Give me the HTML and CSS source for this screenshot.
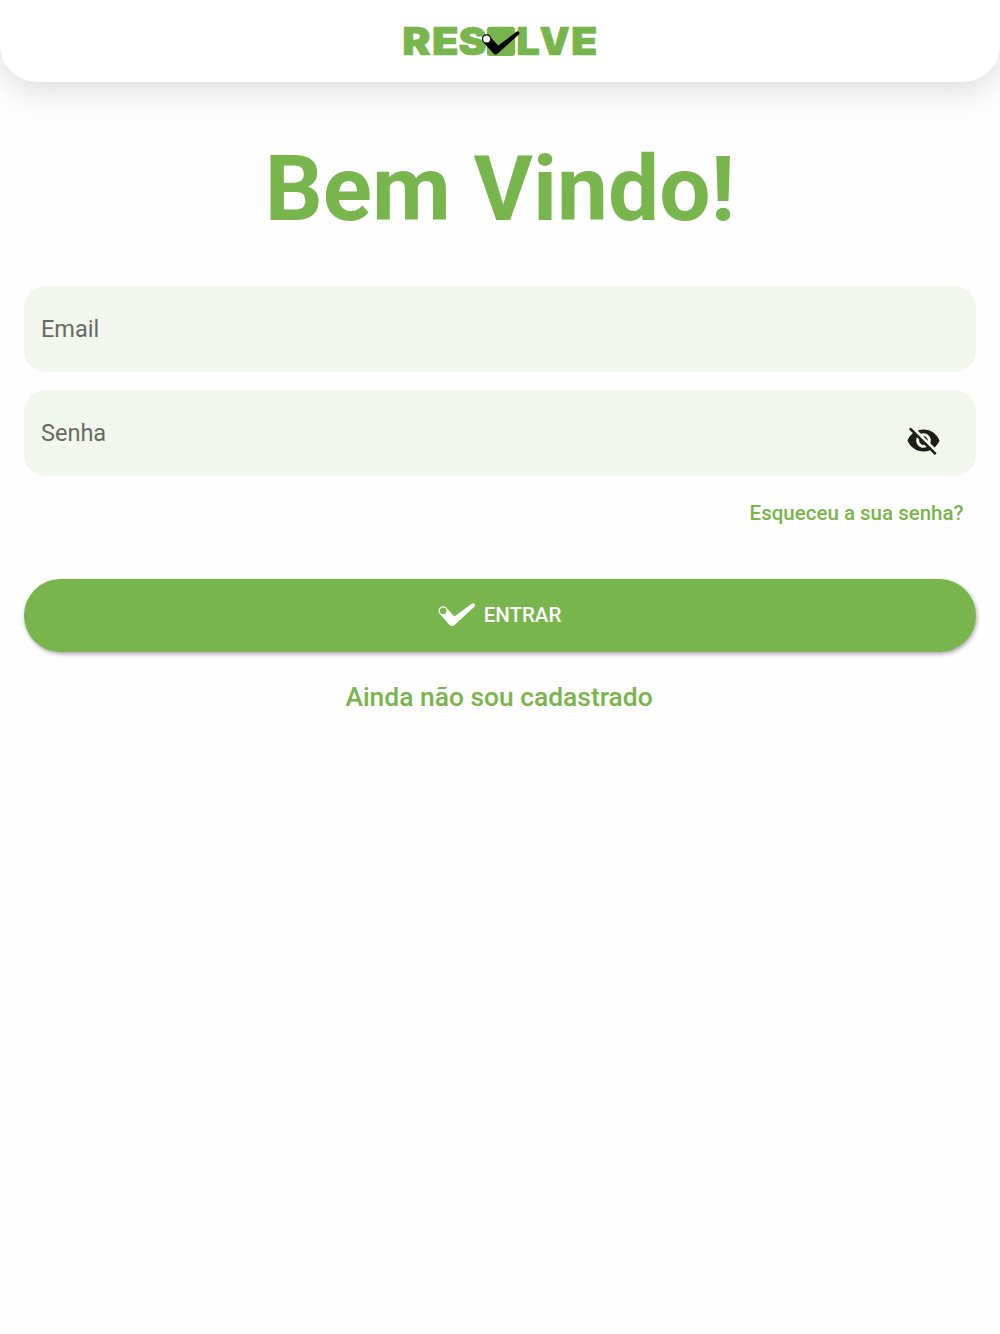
FILE: index.html
```html
<!DOCTYPE html>
<html lang="pt-BR">
<head>
    <meta charset="UTF-8">
    <meta name="viewport" content="width=device-width, initial-scale=1.0">
    <title>Resolve</title>
    <link rel="stylesheet" href="styles.css">
</head>
<body>
    <header class="header">
        <svg class="logo" width="200" height="60" viewBox="0 -10 200 60" role="img" aria-label="Resolve">
            <g class="logo-text">
                <text x="2.2" y="34.1" textLength="28.4" lengthAdjust="spacingAndGlyphs">R</text>
                <text x="32" y="34.1" textLength="26.6" lengthAdjust="spacingAndGlyphs">E</text>
                <text x="58.5" y="34.1" textLength="28" lengthAdjust="spacingAndGlyphs">S</text>
                <text x="116.2" y="34.1" textLength="23.6" lengthAdjust="spacingAndGlyphs">L</text>
                <text x="139.4" y="34.1" textLength="30.4" lengthAdjust="spacingAndGlyphs">V</text>
                <text x="171" y="34.1" textLength="26.4" lengthAdjust="spacingAndGlyphs">E</text>
            </g>
            <rect class="logo-box" x="86.8" y="5.8" width="28.4" height="29.2" rx="3.5"/>
            <path class="logo-check" d="M83.5 21.5 L89.8 15.5 L98.3 24.5 L116.8 10.5 Q118.6 9.8 119.3 11.2 Q119.8 12.6 118.8 13.5 L97.8 32.5 Q95.5 34.6 93.2 32.3 Z"/>
            <circle class="logo-dot" cx="86.6" cy="17.9" r="4.1"/>
        </svg>
    </header>

    <main class="login">
        <h1>Bem Vindo!</h1>

        <form class="form">
            <div class="field">
                <input type="email" placeholder="Email" aria-label="Email">
            </div>
            <div class="field">
                <input type="password" placeholder="Senha" aria-label="Senha">
                <svg class="eye" viewBox="0 0 24 24">
                    <path d="M12 7c2.76 0 5 2.24 5 5 0 .65-.13 1.26-.36 1.83l2.92 2.92c1.51-1.26 2.7-2.89 3.43-4.75-1.73-4.39-6-7.5-11-7.5-1.4 0-2.74.25-3.98.7l2.16 2.16C10.74 7.13 11.35 7 12 7zM2 4.27l2.28 2.28.46.46C3.08 8.3 1.78 10.02 1 12c1.73 4.39 6 7.5 11 7.5 1.55 0 3.03-.3 4.38-.84l.42.42L19.73 22 21 20.73 3.27 3 2 4.27zM7.53 9.8l1.55 1.55c-.05.21-.08.43-.08.65 0 1.66 1.34 3 3 3 .22 0 .44-.03.65-.08l1.55 1.55c-.67.33-1.41.53-2.2.53-2.76 0-5-2.24-5-5 0-.79.2-1.53.53-2.2zm4.31-.78l3.15 3.15.02-.16c0-1.66-1.34-3-3-3l-.17.01z"/>
                </svg>
            </div>
            <a class="forgot" href="#">Esqueceu a sua senha?</a>
            <button class="enter" type="button">
                <svg class="check" width="38" height="26" viewBox="0 0 38 26">
                    <path d="M1.8 11.8 L8.7 6.3 L16.3 14.5 L34 1.6 Q36 .7 37 2.2 Q37.6 3.7 36.4 4.8 L16.3 23.2 Q13.7 25.2 11.3 22.8 Z"/>
                    <circle cx="5.1" cy="8.8" r="4"/>
                </svg>
                <span>ENTRAR</span>
            </button>
            <a class="register" href="#">Ainda não sou cadastrado</a>
        </form>
    </main>
</body>
</html>
```
FILE: styles.css
```css
body {
    margin: 0;
    min-height: 100vh;
    background: #fefefe;
    font-family: Roboto, sans-serif;
    overflow-x: hidden;
}

.header {
    height: 82px;
    display: flex;
    justify-content: center;
    align-items: flex-start;
    padding-top: 11px;
    box-sizing: border-box;
    background: white;
    border-radius: 0 0 37px 37px;
    box-shadow: 0 8px 34px rgba(0, 0, 0, 0.14);
}

.logo-text {
    font-family: Inter, sans-serif;
    font-size: 38.5px;
    font-weight: 900;
    fill: #78b54c;
    stroke: #78b54c;
    stroke-width: 0.7;
}

.logo-box {
    fill: #78b54c;
}

.logo-dot {
    fill: white;
    stroke: black;
    stroke-width: 1.2;
}

.login {
    padding: 0 24px;
}

h1 {
    margin: 53px 0 0;
    color: #78b54c;
    font-size: 91px;
    line-height: 108px;
    font-weight: 700;
    text-align: center;
}

.form {
    display: flex;
    flex-direction: column;
    margin-top: 43px;
}

.field {
    display: flex;
    align-items: center;
    height: 86px;
    margin-bottom: 18px;
    padding: 0 35px 0 17px;
    box-sizing: border-box;
    background: #f2f7ed;
    border-radius: 22px;
}

.field input {
    flex: 1;
    padding: 0;
    border: none;
    outline: none;
    background: none;
    font-family: inherit;
    font-size: 23.5px;
}

.field input::placeholder {
    color: #666a64;
}

.eye {
    width: 35px;
    height: 35px;
    margin-top: 15px;
    fill: #1c1e1b;
}

.forgot {
    align-self: flex-end;
    margin: 7px 12.5px 0 0;
    color: #78b54c;
    font-size: 20.5px;
    line-height: 24px;
    font-weight: 500;
    text-decoration: none;
}

.enter {
    display: flex;
    align-items: center;
    justify-content: center;
    gap: 8px;
    height: 73px;
    margin-top: 54px;
    padding: 0 7px 1px 6px;
    border: none;
    border-radius: 37px;
    background: #78b54c;
    box-shadow: 1px 2px 4px rgba(0, 0, 0, 0.35);
    color: white;
    font-family: inherit;
    font-size: 20.5px;
    font-weight: 500;
}

.check {
    fill: white;
}

.check circle {
    fill: #78b54c;
    stroke: white;
    stroke-width: 1.2;
}

.register {
    margin-top: 29px;
    padding-right: 2px;
    color: #78b54c;
    font-size: 26.4px;
    line-height: 32px;
    font-weight: 500;
    text-align: center;
    text-decoration: none;
}
```
